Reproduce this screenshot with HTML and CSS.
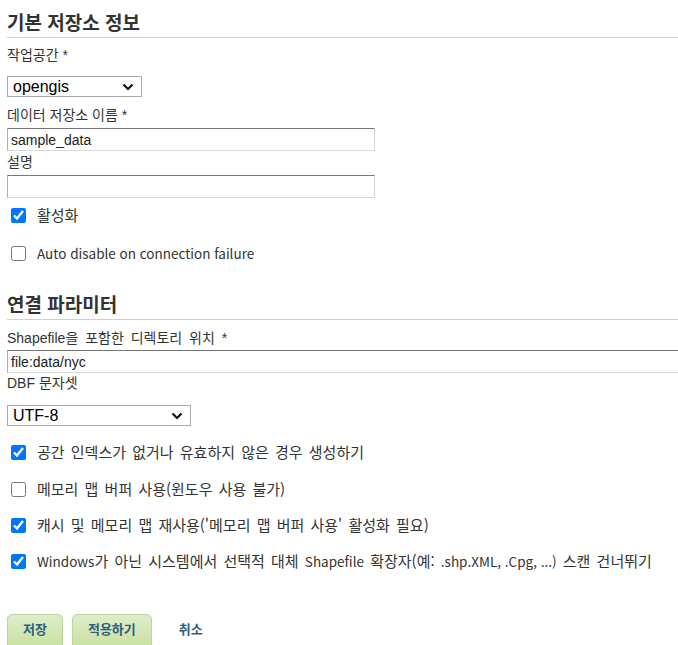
FILE: index.html
```html
<!DOCTYPE html>
<html lang="ko">
<head>
<meta charset="utf-8">
<link rel="stylesheet" href="styles.css">
</head>
<body>
<div class="page">
  <h2 class="section-title">기본 저장소 정보</h2>

  <label class="label label-first">작업공간 *</label>
  <div class="select-wrap select-ws">
    <select class="select"><option>opengis</option></select>
    <svg class="chev" width="12" height="8" viewBox="0 0 12 8"><path d="M1.5 1.5 L6 6 L10.5 1.5" fill="none" stroke="#111" stroke-width="2.2"/></svg>
  </div>

  <label class="label label-after-select">데이터 저장소 이름 *</label>
  <input class="text-input input-name" type="text" value="sample_data">

  <label class="label label-tight">설명</label>
  <input class="text-input input-desc" type="text" value="">

  <div class="check-row row-enabled">
    <input type="checkbox" class="check" checked>
    <span class="check-label">활성화</span>
  </div>
  <div class="check-row row-auto">
    <input type="checkbox" class="check">
    <span class="check-label"><span class="en">Auto disable on connection failure</span></span>
  </div>

  <h2 class="section-title section-second">연결 파라미터</h2>

  <label class="label label-first2 label-wide">Shapefile을 포함한 디렉토리 위치 *</label>
  <div class="wide-wrap">
    <input class="text-input input-url" type="text" value="file:data/nyc">
  </div>

  <label class="label label-dbf">DBF 문자셋</label>
  <div class="select-wrap select-cs">
    <select class="select"><option>UTF-8</option></select>
    <svg class="chev" width="12" height="8" viewBox="0 0 12 8"><path d="M1.5 1.5 L6 6 L10.5 1.5" fill="none" stroke="#111" stroke-width="2.2"/></svg>
  </div>

  <div class="check-row row-c1">
    <input type="checkbox" class="check" checked>
    <span class="check-label">공간 인덱스가 없거나 유효하지 않은 경우 생성하기</span>
  </div>
  <div class="check-row row-c2">
    <input type="checkbox" class="check">
    <span class="check-label">메모리 맵 버퍼 사용(윈도우 사용 불가)</span>
  </div>
  <div class="check-row row-c3">
    <input type="checkbox" class="check" checked>
    <span class="check-label">캐시 및 메모리 맵 재사용('메모리 맵 버퍼 사용' 활성화 필요)</span>
  </div>
  <div class="check-row row-c3">
    <input type="checkbox" class="check" checked>
    <span class="check-label"><span class="en">Windows</span>가 아닌 시스템에서 선택적 대체 <span class="en">Shapefile</span> 확장자(예: <span class="en">.shp.XML, .Cpg, ...)</span> 스캔 건너뛰기</span>
  </div>

  <div class="actions">
    <button class="btn">저장</button>
    <button class="btn">적용하기</button>
    <a class="cancel">취소</a>
  </div>
</div>
</body>
</html>
```

FILE: styles.css
```css
html, body {
  margin: 0;
  padding: 0;
  background: #fff;
  overflow: hidden;
}

.page {
  padding: 0 0 0 7px;
  display: flex;
  flex-direction: column;
  align-items: flex-start;
  font-family: "Liberation Sans", "Noto Sans CJK KR", sans-serif;
  color: #333;
}

.section-title {
  align-self: stretch;
  margin: 10px 0 0 0;
  padding: 0 0 3px 0;
  font-family: "Noto Sans CJK KR", sans-serif;
  font-size: 19px;
  font-weight: bold;
  line-height: 24px;
  color: #333;
  border-bottom: 1px solid #c9dca8;
}

.section-second {
  margin-top: 29px;
}

.label {
  display: block;
  font-size: 14px;
  line-height: 20px;
  color: #333;
}

.label-wide { word-spacing: 3px; }

.label-first { margin-top: 7px; }
.label-after-select { margin-top: 8px; }
.label-tight { margin-top: 1px; }
.label-first2 { margin-top: 8px; }
.label-dbf { margin-top: 0; }

.select-wrap {
  position: relative;
  margin-top: 11px;
}

.select-ws .select { width: 135px; }
.select-cs { margin-top: 12px; }
.select-cs .select { width: 184px; }

.select {
  appearance: none;
  -webkit-appearance: none;
  display: block;
  height: 21px;
  margin: 0;
  padding: 0 0 0 5px;
  border: 1px solid #aaa;
  border-radius: 0;
  background: #fff;
  font-family: "Liberation Sans", sans-serif;
  font-size: 16px;
  color: #000;
}

.chev {
  position: absolute;
  right: 8px;
  top: 7px;
}

.text-input {
  display: block;
  box-sizing: border-box;
  height: 23px;
  margin: 3px 0 0 0;
  padding: 0 3px;
  border-style: solid;
  border-width: 1px;
  border-color: #767676 #d4d4d4 #d9d9d9 #b0b0b0;
  font-family: "Liberation Sans", sans-serif;
  font-size: 14px;
  color: #222;
  background: #fff;
}

.input-name { width: 368px; }
.input-desc { width: 368px; margin-top: 3px; }

.wide-wrap {
  align-self: stretch;
  overflow: hidden;
}

.input-url {
  width: 720px;
  margin-top: 2px;
}

.check-row {
  display: flex;
  align-items: center;
  height: 20px;
  margin-top: 7px;
}

.row-auto { margin-top: 18px; }
.row-c1 { margin-top: 16px; }
.row-c2 { margin-top: 17px; }
.row-c3 { margin-top: 16px; }

.check {
  width: 15px;
  height: 15px;
  margin: 0 11px 0 4px;
  accent-color: #0075ff;
}

.check-label {
  font-family: "Noto Sans CJK KR", sans-serif;
  font-size: 15px;
  line-height: 20px;
  word-spacing: 2px;
  color: #333;
  white-space: nowrap;
}

.en {
  font-size: 13.5px;
  word-spacing: 0;
}

.actions {
  display: flex;
  align-items: flex-start;
  gap: 9px;
  margin-top: 43px;
}

.btn {
  height: 40px;
  padding: 5px 15px 0 15px;
  border: 1px solid #bcd59a;
  border-radius: 5px 5px 0 0;
  background: linear-gradient(#dfecca, #c4df9a);
  font-family: "Noto Sans CJK KR", sans-serif;
  font-size: 13px;
  font-weight: bold;
  line-height: 17px;
  color: #2f5f7e;
  display: flex;
  align-items: flex-start;
}

.cancel {
  padding: 6px 0 0 18px;
  font-family: "Noto Sans CJK KR", sans-serif;
  font-size: 13px;
  font-weight: bold;
  line-height: 17px;
  color: #2f5f7e;
}
```
